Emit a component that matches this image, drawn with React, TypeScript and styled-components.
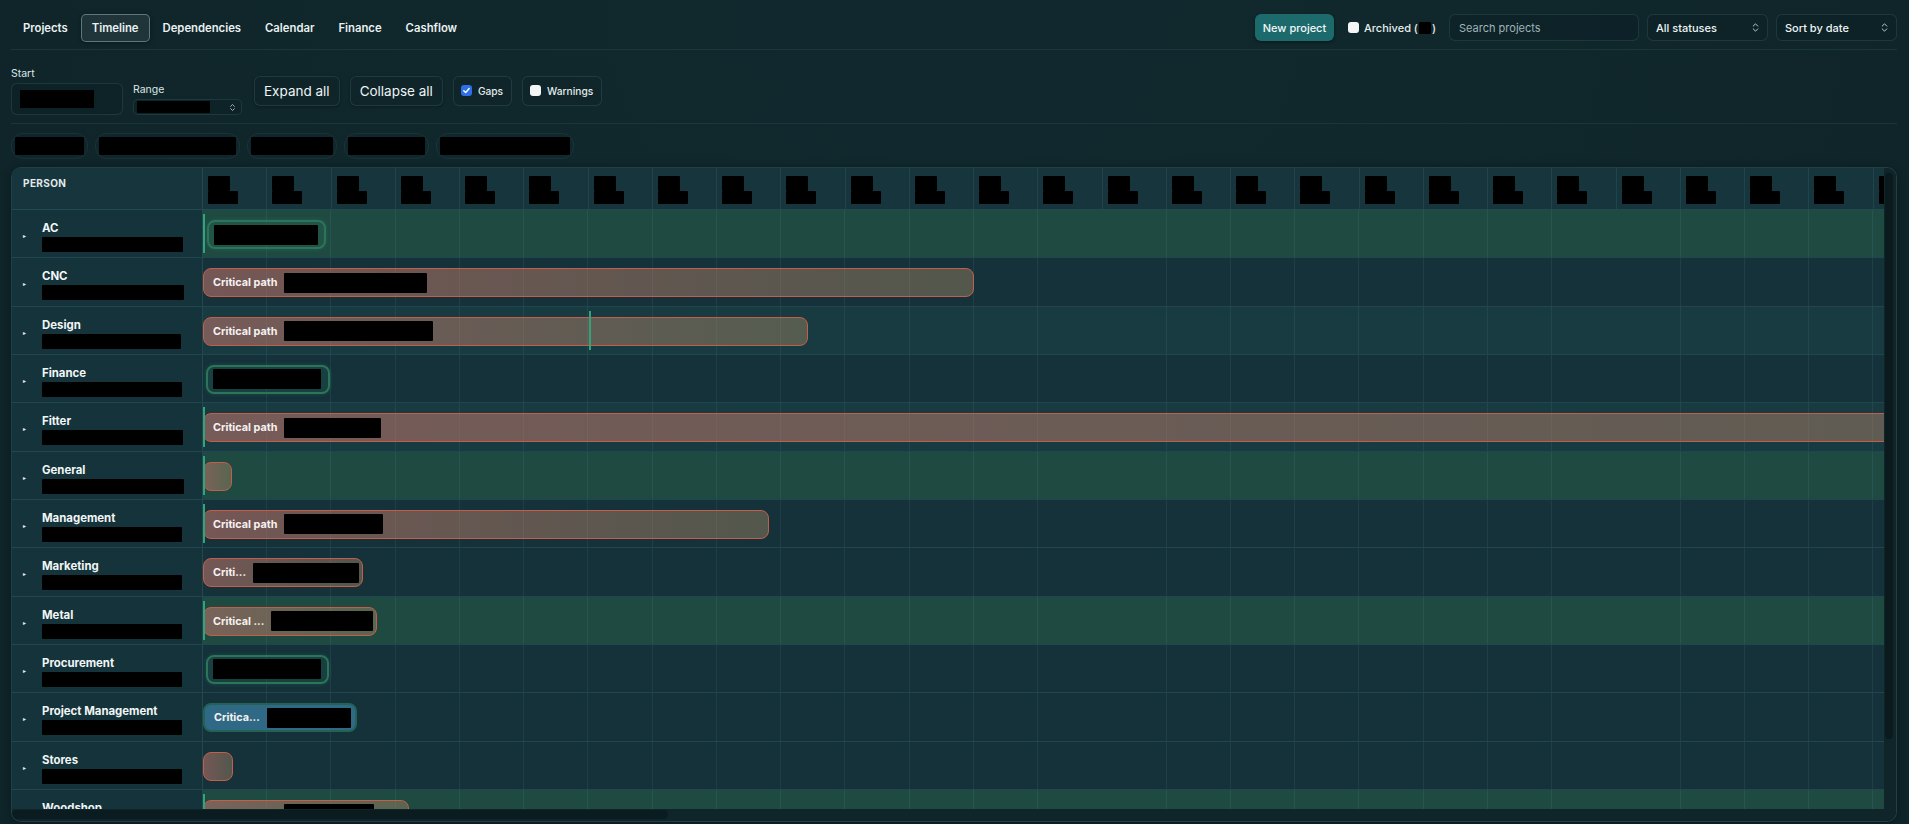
import React from "react";
import styled, { createGlobalStyle, css } from "styled-components";
import { ChevronsUpDown } from "lucide-react";

const COL = 64.25;
const NCOLS = 80;
const PERSON_W = 191;
const ROW_H = 48.33;

const GlobalStyle = createGlobalStyle`
  html, body { margin: 0; padding: 0; }
  body {
    background: #10262b;
    color: #e8f0f0;
    font-family: Inter, "Noto Sans", sans-serif;
    overflow: hidden;
  }
  * { box-sizing: border-box; }
`;

const Page = styled.div`
  height: 824px;
  padding: 0 12px 0 11px;
  display: flex;
  flex-direction: column;
  background: radial-gradient(ellipse at 50% 0%, #11292e 0%, #0f252a 70%);
`;

const TopBar = styled.header`
  height: 50px;
  padding-top: 6px;
  display: flex;
  align-items: center;
  justify-content: space-between;
  border-bottom: 1px solid rgba(90, 150, 160, 0.14);
  flex-shrink: 0;
`;

const Tabs = styled.nav`
  display: flex;
  gap: 2px;
  margin-left: 1px;
`;

const Tab = styled.button<{ $active?: boolean }>`
  height: 28px;
  padding: 0 10px;
  display: flex;
  align-items: center;
  font: 600 11.3px Inter, sans-serif;
  color: #e9f1f1;
  background: transparent;
  border: 1px solid transparent;
  border-radius: 5px;
  ${(p) =>
    p.$active &&
    css`
      background: rgba(255, 255, 255, 0.07);
      border-color: rgba(170, 205, 210, 0.45);
      box-shadow: 0 1px 4px rgba(0, 0, 0, 0.35);
    `}
`;

const Actions = styled.div`
  display: flex;
  align-items: center;
  gap: 8px;
`;

const PrimaryButton = styled.button`
  height: 27px;
  width: 79px;
  border: none;
  border-radius: 6px;
  background: #1d6a6d;
  color: #f2f8f8;
  font: 500 11px Inter, sans-serif;
  box-shadow: 0 1px 3px rgba(0, 0, 0, 0.4);
`;

const CheckLabel = styled.label`
  display: flex;
  align-items: center;
  gap: 5px;
  padding: 0 5px 0 6px;
  font: 500 11px Inter, sans-serif;
  color: #e6eeee;
`;

const Paren = styled.span`
  display: flex;
  align-items: center;
  gap: 1px;
`;

const Box = styled.span<{ $checked?: boolean }>`
  width: 11px;
  height: 11px;
  border-radius: 3px;
  display: inline-flex;
  align-items: center;
  justify-content: center;
  background: ${(p) => (p.$checked ? "#2d6fe6" : "#f4f6f6")};
  flex-shrink: 0;
`;

const Redact = styled.span<{ $w: number; $h: number }>`
  display: inline-block;
  width: ${(p) => p.$w}px;
  height: ${(p) => p.$h}px;
  background: #000;
  border-radius: 1px;
  flex-shrink: 0;
`;

const SearchInput = styled.input`
  width: 190px;
  height: 27px;
  padding: 0 9px;
  border-radius: 6px;
  border: 1px solid rgba(110, 170, 180, 0.16);
  background: rgba(10, 30, 34, 0.35);
  color: #e6eeee;
  font: 400 11px Inter, sans-serif;
  outline: none;
  &::placeholder { color: #9fb3b6; }
`;

const Select = styled.div<{ $w: number }>`
  width: ${(p) => p.$w}px;
  height: 27px;
  padding: 0 6px 0 8px;
  border-radius: 6px;
  border: 1px solid rgba(110, 170, 180, 0.16);
  background: rgba(10, 30, 34, 0.3);
  display: flex;
  align-items: center;
  justify-content: space-between;
  font: 500 11px Inter, sans-serif;
  color: #eef4f4;
`;

const FilterBar = styled.div`
  height: 74px;
  padding: 16px 0 8px;
  display: flex;
  align-items: center;
  gap: 10px;
  border-bottom: 1px solid rgba(90, 150, 160, 0.14);
  flex-shrink: 0;
`;

const Field = styled.div<{ $bottom?: boolean }>`
  display: flex;
  flex-direction: column;
  gap: 3px;
  align-self: ${(p) => (p.$bottom ? "flex-end" : "center")};
`;

const FieldLabel = styled.span`
  font: 400 10.5px/13px Inter, sans-serif;
  color: #dbe5e6;
`;

const DateInput = styled.div`
  width: 112px;
  height: 32px;
  padding: 0 8px;
  display: flex;
  align-items: center;
  border-radius: 6px;
  border: 1px solid rgba(110, 170, 180, 0.16);
  background: rgba(10, 30, 34, 0.3);
`;

const SmallSelect = styled.div`
  width: 109px;
  height: 16px;
  padding: 0 4px 0 3px;
  display: flex;
  align-items: center;
  justify-content: space-between;
  border-radius: 5px;
  border: 1px solid rgba(110, 170, 180, 0.16);
  background: rgba(10, 30, 34, 0.3);
  color: #dfe8e8;
`;

const GhostButton = styled.button<{ $first?: boolean }>`
  height: 30px;
  padding: 0 9px;
  margin-left: ${(p) => (p.$first ? 2 : 0)}px;
  border-radius: 6px;
  border: 1px solid rgba(110, 170, 180, 0.17);
  background: rgba(10, 30, 34, 0.25);
  color: #eef4f4;
  font: 400 13.5px Inter, sans-serif;
  box-shadow: 0 1px 3px rgba(0, 0, 0, 0.3);
`;

const ToggleBox = styled.label`
  height: 30px;
  padding: 0 8px 0 7px;
  display: flex;
  align-items: center;
  gap: 6px;
  border-radius: 6px;
  border: 1px solid rgba(110, 170, 180, 0.17);
  background: rgba(10, 30, 34, 0.25);
  font: 500 10.2px Inter, sans-serif;
  color: #e4ecec;
`;

const ChipRow = styled.div`
  height: 43px;
  display: flex;
  align-items: center;
  gap: 7px;
  flex-shrink: 0;
`;

const Chip = styled.span`
  padding: 3px;
  border-radius: 12px;
  border: 1px solid rgba(110, 170, 180, 0.1);
  display: flex;
`;

const TableFrame = styled.section`
  height: 655px;
  border: 1px solid rgba(90, 160, 170, 0.22);
  border-radius: 10px;
  overflow: hidden;
  background: #10262b;
  box-shadow: 0 2px 10px rgba(0, 0, 0, 0.35);
  flex-shrink: 0;
  display: grid;
  grid-template-columns: minmax(0, 1fr) 12px;
  grid-template-rows: minmax(0, 1fr) 12px;
`;

const Viewport = styled.div`
  overflow: hidden;
  background: #14303a;
`;

const VTrack = styled.div`
  padding: 5px 3px 0 1px;
  background: #0f252a;
`;

const VThumb = styled.div`
  height: 566px;
  border-radius: 5px;
  background: #0a1a1d;
`;

const HTrack = styled.div`
  padding: 1px 0 2px 0;
  background: #0f252a;
`;

const HThumb = styled.div`
  width: 656px;
  height: 9px;
  border-radius: 5px;
  background: #0b1c20;
`;

const Corner = styled.div`
  background: #0f252a;
`;

const Grid = styled.div`
  width: ${PERSON_W + NCOLS * COL}px;
`;

const HeaderRow = styled.div`
  display: flex;
  height: 42px;
  border-bottom: 1px solid rgba(90, 160, 170, 0.2);
  background: #16353c;
`;

const PersonHead = styled.div`
  width: ${PERSON_W}px;
  flex-shrink: 0;
  padding: 9px 0 0 11px;
  border-right: 1px solid rgba(90, 160, 170, 0.2);
  font: 700 10px Inter, sans-serif;
  letter-spacing: 0.4px;
  color: #e2eaea;
`;

const DayCell = styled.div`
  width: ${COL}px;
  flex-shrink: 0;
  padding: 8px 0 0 5px;
  border-right: 1px solid rgba(90, 160, 170, 0.14);
  display: flex;
  flex-direction: column;
`;

const Row = styled.div`
  display: flex;
  height: ${ROW_H}px;
  border-bottom: 1px solid rgba(90, 160, 170, 0.2);
`;

const PersonCell = styled.div`
  width: ${PERSON_W}px;
  flex-shrink: 0;
  display: flex;
  align-items: center;
  padding-left: 11px;
  border-right: 1px solid rgba(90, 160, 170, 0.2);
  background: #15333a;
`;

const Caret = styled.span`
  width: 19px;
  font-size: 6px;
  color: #e6eeee;
  padding-top: 4px;
`;

const PersonInfo = styled.div`
  display: flex;
  flex-direction: column;
  gap: 1px;
  padding-top: 6px;
`;

const PersonName = styled.span`
  font: 700 11.4px/15px Inter, sans-serif;
  color: #f1f6f6;
`;

const laneTones = {
  green: "#1f4a42",
  alt: "#183a41",
  base: "#15313a",
};

const Lane = styled.div<{ $tone: keyof typeof laneTones }>`
  position: relative;
  flex: 1;
  background-color: ${(p) => laneTones[p.$tone]};
  background-image: repeating-linear-gradient(
    90deg,
    transparent 0,
    transparent ${COL - 1}px,
    rgba(90, 160, 170, 0.13) ${COL - 1}px,
    rgba(90, 160, 170, 0.13) ${COL}px
  );
`;

const Marker = styled.span`
  position: absolute;
  top: 4px;
  bottom: 4px;
  width: 2px;
  background: #34a37a;
  z-index: 1;
`;

const barKinds = {
  crit: css`
    background: linear-gradient(90deg, rgba(196, 118, 108, 0.55), rgba(168, 140, 100, 0.42));
    border: 1.5px solid #c65d4b;
  `,
  ok: css`
    background: rgba(40, 120, 92, 0.22);
    border: 2px solid #2b7558;
    box-shadow: 0 0 4px rgba(50, 160, 120, 0.25);
    padding-left: 5px !important;
  `,
  blue: css`
    background: #2f6985;
    border: 2px solid #226356;
  `,
};

const Bar = styled.div<{ $kind: keyof typeof barKinds }>`
  position: absolute;
  top: 10px;
  height: 29px;
  border-radius: 8px;
  display: flex;
  align-items: center;
  gap: 7px;
  padding-left: 9px;
  overflow: hidden;
  white-space: nowrap;
  font: 700 10.8px Inter, sans-serif;
  color: #f6f2f0;
  ${(p) => barKinds[p.$kind]}
`;

type BarData = {
  kind: keyof typeof barKinds;
  left: number;
  width: number;
  label?: string;
  block?: number;
};

type RowData = {
  name: string;
  nameBlock: number;
  tone: keyof typeof laneTones;
  marker?: boolean;
  today?: number;
  bar: BarData;
};

const rows: RowData[] = [
  { name: "AC", nameBlock: 141, tone: "green", marker: true, bar: { kind: "ok", left: 4, width: 119, block: 104 } },
  { name: "CNC", nameBlock: 142, tone: "base", bar: { kind: "crit", left: 0, width: 771, label: "Critical path", block: 143 } },
  { name: "Design", nameBlock: 139, tone: "alt", today: 386, bar: { kind: "crit", left: 0, width: 605, label: "Critical path", block: 149 } },
  { name: "Finance", nameBlock: 140, tone: "base", bar: { kind: "ok", left: 3, width: 124, block: 108 } },
  { name: "Fitter", nameBlock: 141, tone: "alt", marker: true, bar: { kind: "crit", left: 0, width: 2600, label: "Critical path", block: 97 } },
  { name: "General", nameBlock: 142, tone: "green", marker: true, bar: { kind: "crit", left: 0, width: 29 } },
  { name: "Management", nameBlock: 140, tone: "base", marker: true, bar: { kind: "crit", left: 0, width: 566, label: "Critical path", block: 99 } },
  { name: "Marketing", nameBlock: 140, tone: "base", bar: { kind: "crit", left: 0, width: 160, label: "Criti...", block: 106 } },
  { name: "Metal", nameBlock: 140, tone: "green", marker: true, bar: { kind: "crit", left: 0, width: 174, label: "Critical ...", block: 102 } },
  { name: "Procurement", nameBlock: 140, tone: "base", bar: { kind: "ok", left: 3, width: 123, block: 108 } },
  { name: "Project Management", nameBlock: 140, tone: "base", bar: { kind: "blue", left: 0, width: 154, label: "Critica...", block: 84 } },
  { name: "Stores", nameBlock: 140, tone: "base", bar: { kind: "crit", left: 0, width: 30 } },
  { name: "Woodshop", nameBlock: 140, tone: "green", marker: true, bar: { kind: "crit", left: 0, width: 206, label: "Critical path", block: 90 } },
];

const chipWidths = [69, 137, 82, 77, 130];

const Check = () => (
  <svg width="9" height="9" viewBox="0 0 10 10" fill="none">
    <path d="M2 5.2 L4.1 7.3 L8 2.8" stroke="#fff" strokeWidth="1.6" strokeLinecap="round" strokeLinejoin="round" />
  </svg>
);

export default function App() {
  return (
    <>
      <GlobalStyle />
      <Page>
        <TopBar>
          <Tabs>
            <Tab>Projects</Tab>
            <Tab $active>Timeline</Tab>
            <Tab>Dependencies</Tab>
            <Tab>Calendar</Tab>
            <Tab>Finance</Tab>
            <Tab>Cashflow</Tab>
          </Tabs>
          <Actions>
            <PrimaryButton>New project</PrimaryButton>
            <CheckLabel>
              <Box />
              <Paren>
                <span>Archived (</span>
                <Redact $w={12} $h={12} />
                <span>)</span>
              </Paren>
            </CheckLabel>
            <SearchInput placeholder="Search projects" />
            <Select $w={121}>
              <span>All statuses</span>
              <ChevronsUpDown size={11} strokeWidth={2} color="#cfdada" />
            </Select>
            <Select $w={121}>
              <span>Sort by date</span>
              <ChevronsUpDown size={11} strokeWidth={2} color="#cfdada" />
            </Select>
          </Actions>
        </TopBar>

        <FilterBar>
          <Field>
            <FieldLabel>Start</FieldLabel>
            <DateInput>
              <Redact $w={74} $h={18} />
            </DateInput>
          </Field>
          <Field $bottom>
            <FieldLabel>Range</FieldLabel>
            <SmallSelect>
              <Redact $w={73} $h={12} />
              <ChevronsUpDown size={9} strokeWidth={2} color="#cfdada" />
            </SmallSelect>
          </Field>
          <GhostButton $first>Expand all</GhostButton>
          <GhostButton>Collapse all</GhostButton>
          <ToggleBox>
            <Box $checked>
              <Check />
            </Box>
            <span>Gaps</span>
          </ToggleBox>
          <ToggleBox>
            <Box />
            <span>Warnings</span>
          </ToggleBox>
        </FilterBar>

        <ChipRow>
          {chipWidths.map((w, i) => (
            <Chip key={i}>
              <Redact $w={w} $h={18} />
            </Chip>
          ))}
        </ChipRow>

        <TableFrame>
          <Viewport>
            <Grid>
              <HeaderRow>
                <PersonHead>PERSON</PersonHead>
                {Array.from({ length: NCOLS }).map((_, i) => (
                  <DayCell key={i}>
                    <Redact $w={22} $h={15} />
                    <Redact $w={30} $h={13} />
                  </DayCell>
                ))}
              </HeaderRow>
              {rows.map((r) => (
                <Row key={r.name}>
                  <PersonCell>
                    <Caret>▸</Caret>
                    <PersonInfo>
                      <PersonName>{r.name}</PersonName>
                      <Redact $w={r.nameBlock} $h={15} />
                    </PersonInfo>
                  </PersonCell>
                  <Lane $tone={r.tone}>
                    {r.marker && <Marker style={{ left: 0 }} />}
                    {r.today !== undefined && <Marker style={{ left: r.today }} />}
                    <Bar $kind={r.bar.kind} style={{ left: r.bar.left, width: r.bar.width }}>
                      {r.bar.label && <span>{r.bar.label}</span>}
                      {r.bar.block && <Redact $w={r.bar.block} $h={20} />}
                    </Bar>
                  </Lane>
                </Row>
              ))}
            </Grid>
          </Viewport>
          <VTrack>
            <VThumb />
          </VTrack>
          <HTrack>
            <HThumb />
          </HTrack>
          <Corner />
        </TableFrame>
      </Page>
    </>
  );
}
